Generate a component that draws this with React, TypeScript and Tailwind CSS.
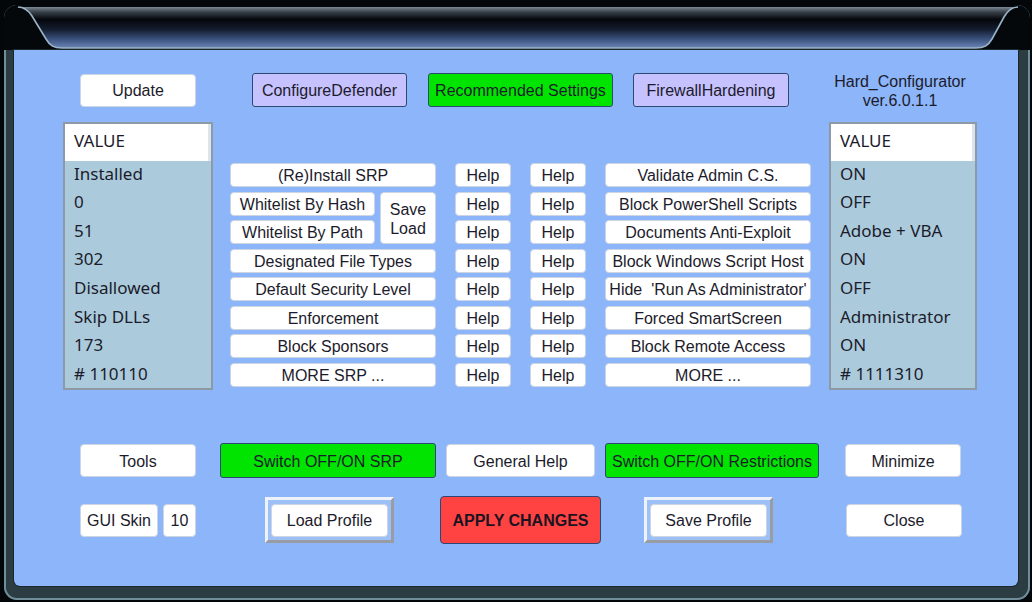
import type { ReactNode } from "react";

const ink = "text-[#1c1b2b]";
const btnFont = "font-['Liberation_Sans',Arial,sans-serif] text-[16px]";
const whiteBtn = `flex shrink-0 items-center justify-center rounded-[4px] border border-[#cdd5e3] bg-white pt-[2px] ${btnFont} ${ink}`;
const colorBtn = `flex shrink-0 items-center justify-center rounded-[3px] border border-[#2c4a70] pt-[2px] ${btnFont} ${ink}`;

const leftValues = ["Installed", "0", "51", "302", "Disallowed", "Skip DLLs", "173", "# 110110"];
const rightValues = ["ON", "OFF", "Adobe + VBA", "ON", "OFF", "Administrator", "ON", "# 1111310"];
const rightActions = [
  "Validate Admin C.S.",
  "Block PowerShell Scripts",
  "Documents Anti-Exploit",
  "Block Windows Script Host",
  "Hide  'Run As Administrator'",
  "Forced SmartScreen",
  "Block Remote Access",
  "MORE ...",
];

function ValueList({ items, width }: { items: string[]; width: string }) {
  return (
    <div className={`h-[268px] shrink-0 border-2 border-[#8d9aa6] bg-[#abcbdc] font-['Noto_Sans',sans-serif] text-[17px] ${ink} ${width}`}>
      <div className="flex h-[37px] items-center border-r-[3px] border-r-[#dde5ec] bg-white pb-[3px] pl-[9px]">VALUE</div>
      <div className="flex flex-col pl-[9px]">
        {items.map((item, i) => (
          <div key={i} className="flex h-[28.6px] items-center whitespace-pre pb-[4px]">
            {item}
          </div>
        ))}
      </div>
    </div>
  );
}

function FramedButton({ children }: { children: ReactNode }) {
  return (
    <div className="flex h-[46px] w-[129px] shrink-0 items-center justify-center border-[3px] border-[#eef2fa] border-r-[#9a9ca4] border-b-[#9a9ca4] bg-[#9dc0f6]">
      <div className={`${whiteBtn} h-[33px] w-[117px]`}>{children}</div>
    </div>
  );
}

function TitleBand() {
  return (
    <svg width="1026" height="45" viewBox="0 0 1026 45" className="block shrink-0">
      <defs>
        <linearGradient id="band" x1="0" y1="0" x2="0" y2="1">
          <stop offset="0" stopColor="#7d8894" />
          <stop offset="0.12" stopColor="#39424c" />
          <stop offset="0.3" stopColor="#05070b" />
          <stop offset="0.55" stopColor="#141d30" />
          <stop offset="0.8" stopColor="#3e5582" />
          <stop offset="1" stopColor="#6b86b8" />
        </linearGradient>
      </defs>
      <rect width="1026" height="45" fill="#05080b" />
      <path
        d="M 12 2 C 20 2 24 5 28 11 L 42 34 C 46 41 50 43 58 43 L 972 43 C 980 43 984 41 988 34 L 1000 12 C 1004 5 1008 2 1016 2 Z"
        fill="url(#band)"
      />
      <path
        d="M 14 2 C 20 2 24 5 28 11 L 42 34 C 46 41 50 43 58 43 L 972 43 C 980 43 984 41 988 34 L 1000 12 C 1004 5 1008 2 1014 2"
        fill="none"
        stroke="#9ab3c6"
        strokeWidth="1.6"
      />
    </svg>
  );
}

export default function App() {
  return (
    <div className="h-[602px] w-[1032px] overflow-hidden bg-[#04070a] pl-[4px] pt-[5px]">
      <div className="flex h-[595px] w-[1026px] flex-col overflow-hidden rounded-[13px] bg-[#2b3c43] shadow-[inset_0_0_0_2px_#6f8e9a]">
        <TitleBand />
        <div className="ml-[10px] mr-[12px] mb-[14px] flex flex-1 flex-col rounded-b-[6px] bg-[#8cb5fa] pt-[23px] shadow-[0_0_0_1px_#1b272c]">
          {/* top buttons */}
          <div className="flex h-[34px] items-center">
            <div className={`${whiteBtn} ml-[66px] h-[33px] w-[116px]`}>Update</div>
            <div className={`${colorBtn} ml-[56px] h-[34px] w-[155px] bg-[#c6c1ff]`}>ConfigureDefender</div>
            <div className={`${colorBtn} ml-[21px] h-[34px] w-[185px] bg-[#00e400]`}>Recommended Settings</div>
            <div className={`${colorBtn} ml-[20px] h-[34px] w-[156px] bg-[#c6c1ff]`}>FirewallHardening</div>
            <div className={`w-[222px] pt-[2px] text-center leading-[19px] ${btnFont} ${ink}`}>
              <div>Hard_Configurator</div>
              <div>ver.6.0.1.1</div>
            </div>
          </div>

          {/* lists and action grid */}
          <div className="mt-[15px] flex items-start">
            <div className="ml-[49px]">
              <ValueList items={leftValues} width="w-[150px]" />
            </div>
            <div className="ml-[17px] mt-[41px] grid grid-cols-[206px_56px_56px_206px] grid-rows-[repeat(8,24px)] gap-x-[19px] gap-y-[4.57px]">
              <div className={`${whiteBtn} col-start-1 row-start-1`}>(Re)Install SRP</div>
              <div className="col-start-1 row-span-2 row-start-2 flex gap-[5px]">
                <div className="flex w-[145px] flex-col gap-[4.57px]">
                  <div className={`${whiteBtn} h-[24px]`}>Whitelist By Hash</div>
                  <div className={`${whiteBtn} h-[24px]`}>Whitelist By Path</div>
                </div>
                <div className={`${whiteBtn} w-[56px] flex-col leading-[19px]`}>
                  <span>Save</span>
                  <span>Load</span>
                </div>
              </div>
              <div className={`${whiteBtn} col-start-1 row-start-4`}>Designated File Types</div>
              <div className={`${whiteBtn} col-start-1 row-start-5`}>Default Security Level</div>
              <div className={`${whiteBtn} col-start-1 row-start-6`}>Enforcement</div>
              <div className={`${whiteBtn} col-start-1 row-start-7`}>Block Sponsors</div>
              <div className={`${whiteBtn} col-start-1 row-start-8`}>MORE SRP ...</div>
              {rightActions.map((label, i) => (
                <div key={`h1-${i}`} className={`${whiteBtn} col-start-2`} style={{ gridRowStart: i + 1 }}>
                  Help
                </div>
              ))}
              {rightActions.map((label, i) => (
                <div key={`h2-${i}`} className={`${whiteBtn} col-start-3`} style={{ gridRowStart: i + 1 }}>
                  Help
                </div>
              ))}
              {rightActions.map((label, i) => (
                <div key={`a-${i}`} className={`${whiteBtn} col-start-4 whitespace-pre`} style={{ gridRowStart: i + 1 }}>
                  {label}
                </div>
              ))}
            </div>
            <div className="ml-[18px]">
              <ValueList items={rightValues} width="w-[148px]" />
            </div>
          </div>

          {/* switches row */}
          <div className="mt-[53px] flex h-[35px] items-center">
            <div className={`${whiteBtn} ml-[66px] h-[33px] w-[116px]`}>Tools</div>
            <div className={`${colorBtn} ml-[24px] h-[35px] w-[216px] bg-[#00e400]`}>Switch OFF/ON SRP</div>
            <div className={`${whiteBtn} ml-[10px] h-[33px] w-[149px]`}>General Help</div>
            <div className={`${colorBtn} ml-[10px] h-[35px] w-[214px] bg-[#00e400]`}>Switch OFF/ON Restrictions</div>
            <div className={`${whiteBtn} ml-[26px] h-[33px] w-[116px]`}>Minimize</div>
          </div>

          {/* bottom row */}
          <div className="mt-[18px] flex h-[48px] items-center">
            <div className={`${whiteBtn} ml-[66px] h-[33px] w-[78px]`}>GUI Skin</div>
            <div className={`${whiteBtn} ml-[5px] h-[33px] w-[33px]`}>10</div>
            <div className="ml-[69px]">
              <FramedButton>Load Profile</FramedButton>
            </div>
            <div className="ml-[46px] flex h-[48px] w-[161px] shrink-0 items-center justify-center rounded-[4px] border border-[#2a4a75] bg-[#ff4343] pt-[1px] font-['Liberation_Sans',Arial,sans-serif] text-[16px] font-bold text-[#1a1320]">
              APPLY CHANGES
            </div>
            <div className="ml-[43px]">
              <FramedButton>Save Profile</FramedButton>
            </div>
            <div className={`${whiteBtn} ml-[73px] h-[33px] w-[116px]`}>Close</div>
          </div>
        </div>
      </div>
    </div>
  );
}
